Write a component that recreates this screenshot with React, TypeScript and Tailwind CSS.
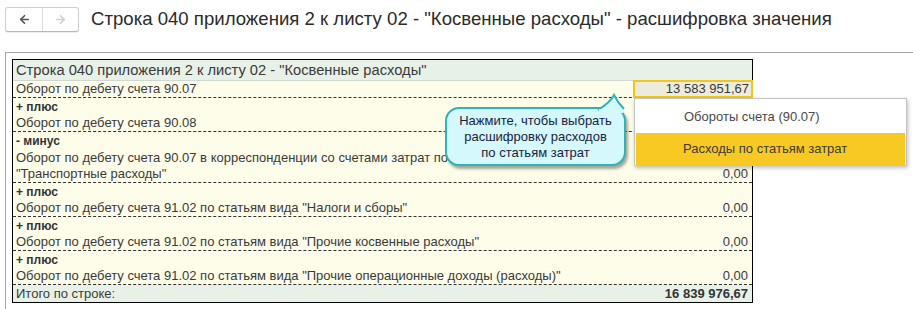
import { ArrowLeft, ArrowRight } from "lucide-react";

type Line = { text: string; bold?: boolean; value?: string };

const groups: Line[][] = [
  [{ text: "Оборот по дебету счета 90.07", value: "13 583 951,67" }],
  [{ text: "+ плюс", bold: true }, { text: "Оборот по дебету счета 90.08" }],
  [
    { text: "- минус", bold: true },
    { text: "Оборот по дебету счета 90.07 в корреспонденции со счетами затрат по" },
    { text: "\"Транспортные расходы\"", value: "0,00" },
  ],
  [{ text: "+ плюс", bold: true }, { text: "Оборот по дебету счета 91.02 по статьям вида \"Налоги и сборы\"", value: "0,00" }],
  [{ text: "+ плюс", bold: true }, { text: "Оборот по дебету счета 91.02 по статьям вида \"Прочие косвенные расходы\"", value: "0,00" }],
  [{ text: "+ плюс", bold: true }, { text: "Оборот по дебету счета 91.02 по статьям вида \"Прочие операционные доходы (расходы)\"", value: "0,00" }],
];

export default function App() {
  return (
    <div className="relative w-[913px] h-[309px] overflow-hidden bg-white font-['Liberation_Sans',Arial,sans-serif] text-[#333]">
      {/* Top bar */}
      <div className="flex items-center h-[38px] pl-[5px] pt-[1px]">
        <div className="flex h-[25px] rounded-[3px] border border-[#cfcfcf] border-b-[#b8b8b8] bg-white shadow-[0_1px_1px_rgba(0,0,0,0.08)]">
          <div className="w-[37px] flex items-center justify-center border-r border-[#dcdcdc]">
            <ArrowLeft size={13} strokeWidth={3} className="text-[#555]" />
          </div>
          <div className="w-[35px] flex items-center justify-center">
            <ArrowRight size={13} strokeWidth={3} className="text-[#cfcfcf]" />
          </div>
        </div>
        <div className="ml-[12px] text-[18.6px] text-[#2b2b2b] leading-none">
          Строка 040 приложения 2 к листу 02 - "Косвенные расходы" - расшифровка значения
        </div>
      </div>

      {/* Frame */}
      <div className="mt-[14px] ml-[5px] border-t border-l border-[#a8a8a8] pt-[6px] pl-[6px] h-[260px]">
        <div className="w-[741px] border border-black text-[13px]">
          <div className="h-[21px] bg-[#e8f1e8] border-b border-[#cfd8cf] px-[3px] text-[14.7px] leading-[20px] text-[#3a3a3a]">
            Строка 040 приложения 2 к листу 02 - "Косвенные расходы"
          </div>
          {groups.map((g, gi) => (
            <div key={gi} className="bg-[#fdfdea] border-b border-dashed border-[#333]">
              {g.map((l, li) => (
                <div
                  key={li}
                  className={`flex items-center justify-between pl-[3px] ${
                    li === g.length - 1 ? "h-[16px]" : "h-[17px]"
                  } leading-[16px]`}
                >
                  <span className={l.bold ? "font-bold text-[12px] text-[#333]" : "text-[#3a3a3a]"}>{l.text}</span>
                  {l.value &&
                    (gi === 0 ? (
                      <span className="w-[120px] h-[18px] -mr-[1px] -mt-[1px] border-2 border-[#f5c518] bg-[#ecebdc] text-right pr-[2px] leading-[14px] text-[#3a3a3a]">
                        {l.value}
                      </span>
                    ) : (
                      <span className="pr-[4px] text-[#3a3a3a]">{l.value}</span>
                    ))}
                </div>
              ))}
            </div>
          ))}
          <div className="flex justify-between h-[17px] leading-[17px] bg-[#e8f1e8] pl-[3px] pr-[4px]">
            <span className="text-[#3a3a3a]">Итого по строке:</span>
            <span className="font-bold text-[#333]">16 839 976,67</span>
          </div>
        </div>
      </div>

      {/* Callout bubble */}
      <div className="absolute left-[445px] top-[107px] w-[181px] h-[59px] rounded-[14px] border-[2px] border-[#2fb3b8] bg-[#d4f8fc] shadow-[2px_3px_3px_rgba(0,0,0,0.35)] flex flex-col items-center justify-center text-[13px] leading-[16px] text-[#1c1c3c]">
        <span>Нажмите, чтобы выбрать</span>
        <span>расшифровку расходов</span>
        <span>по статьям затрат</span>
      </div>
      <svg className="absolute left-[590px] top-[93px]" width="40" height="20" viewBox="0 0 40 20">
        <path d="M8 17 C 16 12, 22 6, 24 2 C 27 8, 30 12, 34 16" fill="#d4f8fc" stroke="#2fb3b8" strokeWidth="2" />
        <rect x="9" y="16" width="24" height="4" fill="#d4f8fc" />
      </svg>

      {/* Popup menu */}
      <div className="absolute left-[634px] top-[98px] w-[273px] h-[68px] bg-white border border-[#c4c4c4] shadow-[1px_2px_4px_rgba(0,0,0,0.25)] p-[1px] text-[13px]">
        <div className="h-[33px] flex items-center pl-[48px] text-[#4a4a4a]">Обороты счета (90.07)</div>
        <div className="h-[32px] flex items-center pl-[47px] bg-[#f9c923] text-[#3a3a3a]">Расходы по статьям затрат</div>
      </div>
    </div>
  );
}
